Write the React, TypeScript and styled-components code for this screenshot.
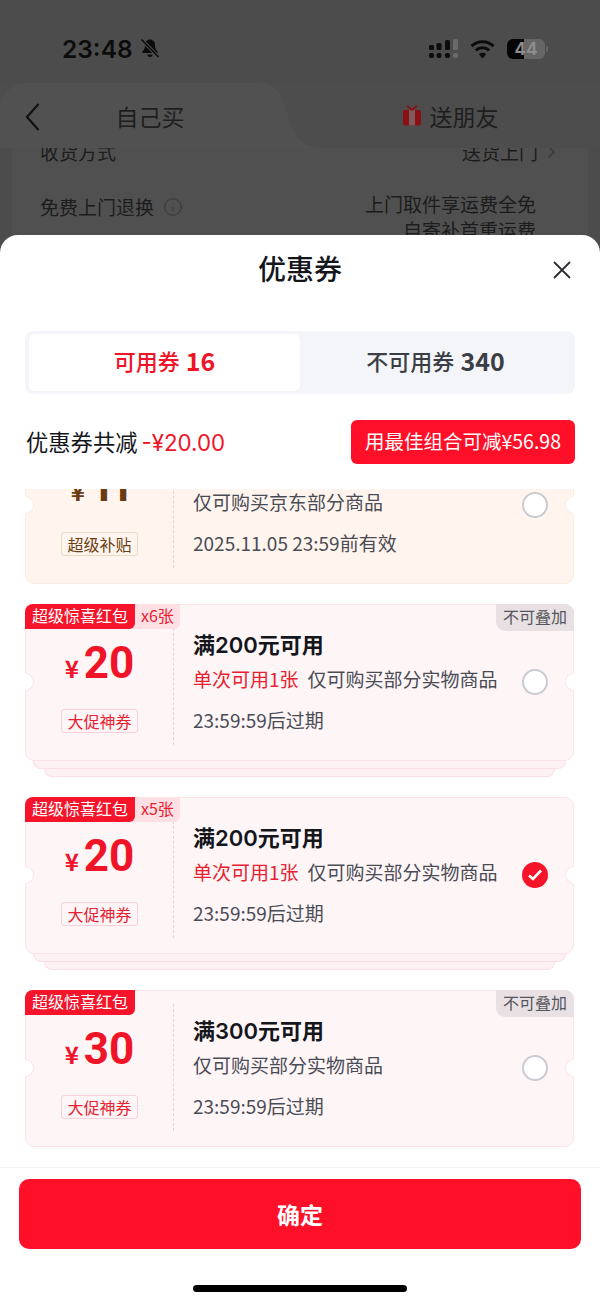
import styled, { createGlobalStyle } from 'styled-components';
import { Info } from 'lucide-react';

const GlobalStyle = createGlobalStyle`
  * {
    box-sizing: border-box;
  }
  body {
    margin: 0;
    background: #fff;
    font-family: "Noto Sans CJK SC", "Noto Sans", sans-serif;
  }
`;

const Page = styled.div`
  display: flex;
  flex-direction: column;
  width: 600px;
  height: 1304px;
  overflow: hidden;
  background: #4c4c4c;
`;

const Backdrop = styled.div`
  flex: none;
  height: 250px;
  margin-bottom: -15px;
  overflow: hidden;
`;

const StatusBar = styled.div`
  display: flex;
  align-items: center;
  justify-content: space-between;
  height: 83px;
  padding: 14px 55px 0 62px;
  color: #0c0c0c;
`;

const StatusGroup = styled.div`
  display: flex;
  align-items: center;
  gap: ${(p: { $gap: number }) => p.$gap}px;
`;

const Time = styled.span`
  font-family: Inter, sans-serif;
  font-size: 24.5px;
  font-weight: 600;
  line-height: 30px;
`;

const Battery = styled.div`
  position: relative;
  width: 38px;
  height: 20px;
  border-radius: 6px;
  background: linear-gradient(90deg, #050505 0 44%, #666 44% 100%);
  color: #8d8d8d;
  font-family: Inter, sans-serif;
  font-size: 17px;
  font-weight: 700;
  line-height: 20px;
  text-align: center;

  &::after {
    content: '';
    position: absolute;
    top: 7px;
    right: -3px;
    width: 2px;
    height: 6px;
    border-radius: 0 2px 2px 0;
    background: #666;
  }
`;

const TabBar = styled.div`
  position: relative;
  z-index: 1;
  display: grid;
  grid-template-columns: 300px 300px;
  align-items: center;
  height: 65px;
  background: #4d4d4d;
`;

const TabShape = styled.svg`
  position: absolute;
  top: 0;
  left: 0;
`;

const TabLabel = styled.div`
  position: relative;
  display: flex;
  align-items: center;
  justify-content: center;
  gap: 8px;
  color: #1e1e1e;
  font-size: 23px;
  line-height: 32px;
`;

const BackIcon = styled.svg`
  position: absolute;
  top: 19px;
  left: 25px;
`;

const BehindCard = styled.div`
  height: 120px;
  margin: -15px 12px 0;
  padding: 6px 28px 0;
  background: #505050;
  color: #1c1c1c;
  font-size: 19px;
  line-height: 26px;
`;

const BehindRow = styled.div`
  display: flex;
  align-items: flex-start;
  justify-content: space-between;
  margin-bottom: 26px;
`;

const BehindLabel = styled.span<{ $drop?: number }>`
  display: flex;
  align-items: center;
  gap: 9px;
  margin-top: ${(p) => p.$drop ?? 0}px;
`;

const BehindValue = styled.span`
  display: flex;
  align-items: center;
  gap: 9px;
  margin-right: ${(p: { $inset: number }) => p.$inset}px;
`;

const BehindLines = styled.span`
  text-align: right;
`;

const InfoIcon = styled(Info)`
  color: #333;
`;

const Sheet = styled.div`
  position: relative;
  z-index: 2;
  display: flex;
  flex: 1;
  flex-direction: column;
  min-height: 0;
  border-radius: 18px 18px 0 0;
  background: #fff;
`;

const SheetHeader = styled.div`
  position: relative;
  height: 96px;
  padding-top: 13px;
  color: #14161c;
  font-size: 28px;
  font-weight: 500;
  line-height: 40px;
  text-align: center;
`;

const CloseIcon = styled.svg`
  position: absolute;
  top: 25px;
  right: 28px;
`;

const Segment = styled.div`
  display: grid;
  grid-template-columns: 271px 1fr;
  height: 63px;
  margin: 0 25px;
  padding: 3px 4px;
  border-radius: 8px;
  background: #f4f5f9;
`;

const SegmentItem = styled.div<{ $active?: boolean }>`
  display: flex;
  align-items: center;
  justify-content: center;
  gap: 6px;
  padding-bottom: 5px;
  border-radius: 6px;
  background: ${(p) => (p.$active ? '#fff' : 'transparent')};
  color: ${(p) => (p.$active ? '#f01428' : '#3c3e46')};
  font-size: 22px;
  font-weight: 500;
`;

const SegmentCount = styled.span`
  font-size: 25px;
  font-weight: 700;
`;

const Summary = styled.div`
  display: flex;
  align-items: center;
  justify-content: space-between;
  height: 44px;
  margin: 26px 25px 25px 26px;
`;

const SummaryText = styled.div`
  padding-bottom: 3px;
  color: #14161c;
  font-size: 22.3px;
`;

const SummaryAmount = styled.span`
  margin-left: 4px;
  color: #f01428;
  font-family: Inter, sans-serif;
`;

const BestButton = styled.div`
  display: flex;
  align-items: center;
  justify-content: center;
  width: 224px;
  height: 44px;
  padding-bottom: 3px;
  border-radius: 6px;
  background: #ff1028;
  color: #fff;
  font-size: 19.5px;
  white-space: nowrap;
`;

const CouponList = styled.div`
  display: flex;
  flex: 1;
  flex-direction: column;
  gap: 20px;
  min-height: 0;
  padding: 0 26px 0 25px;
  overflow: hidden;
`;

const CouponItem = styled.div<{ $clip?: number }>`
  flex: none;
  margin-top: ${(p) => (p.$clip ? -p.$clip : 0)}px;
`;

const CouponCard = styled.div<{ $tone: 'red' | 'gold' }>`
  position: relative;
  display: grid;
  grid-template-columns: 148px 1fr;
  height: 157px;
  border: 1px solid ${(p) => (p.$tone === 'gold' ? '#f9eee2' : '#fbe3e8')};
  border-radius: 9px;
  background: ${(p) => (p.$tone === 'gold' ? '#fff5ee' : '#fef5f7')};
`;

const StackLayer = styled.div<{ $inset: number }>`
  height: 8px;
  margin: 0 ${(p) => p.$inset}px;
  border: 1px solid #fbdfe5;
  border-top: none;
  border-radius: 0 0 8px 8px;
  background: #fdf1f4;
`;

const Notch = styled.span<{ $side: 'left' | 'right'; $tone: 'red' | 'gold' }>`
  position: absolute;
  top: 68px;
  ${(p) => p.$side}: -1px;
  width: 9px;
  height: 18px;
  border: 1px solid ${(p) => (p.$tone === 'gold' ? '#f9eee2' : '#fbe3e8')};
  border-${(p) => p.$side}-color: #fff;
  border-radius: ${(p) => (p.$side === 'left' ? '0 9px 9px 0' : '9px 0 0 9px')};
  background: #fff;
`;

const PriceColumn = styled.div`
  display: flex;
  flex-direction: column;
  align-items: center;
  margin: 13px 0 15px;
  padding-top: 20px;
  border-right: 1px dashed #f7c9d1;
`;

const Price = styled.div<{ $tone: 'red' | 'gold' }>`
  display: flex;
  align-items: baseline;
  gap: 5px;
  height: 50px;
  color: ${(p) => (p.$tone === 'gold' ? '#6b3a10' : '#f01428')};
  font-family: Roboto, sans-serif;
  font-size: 44px;
  font-weight: 700;
  line-height: 50px;
  letter-spacing: ${(p) => (p.$tone === 'gold' ? '-6px' : '0')};
`;

const Yen = styled.span`
  font-family: "Noto Sans CJK SC", sans-serif;
  font-size: 24px;
  letter-spacing: 0;
`;

const PriceTag = styled.div<{ $tone: 'red' | 'gold' }>`
  display: flex;
  align-items: center;
  height: 24px;
  margin-top: 21px;
  padding: 0 5px;
  border: 1px solid ${(p) => (p.$tone === 'gold' ? '#e8d8c4' : '#fbd0d8')};
  border-radius: 3px;
  color: ${(p) => (p.$tone === 'gold' ? '#6b3f15' : '#e8202f')};
  font-size: 16px;
  white-space: nowrap;
`;

const CouponBody = styled.div`
  padding: 25px 0 0 19px;
`;

const CouponTitle = styled.div`
  color: #14161c;
  font-family: Inter, "Noto Sans CJK SC", sans-serif;
  font-size: 22px;
  font-weight: 600;
  line-height: 30px;
`;

const CouponLine = styled.div<{ $gap: number }>`
  margin-top: ${(p) => p.$gap}px;
  color: #4a4c55;
  font-size: 19px;
  line-height: 28px;
  white-space: nowrap;
`;

const LimitText = styled.span`
  margin-right: 9px;
  color: #e8202f;
`;

const Badge = styled.div`
  position: absolute;
  top: -1px;
  left: -1px;
  display: flex;
  height: 25px;
  border-radius: 8px 0 6px 0;
  background: #fddfe4;
`;

const BadgeName = styled.span`
  padding: 0 7px;
  border-radius: 8px 0 6px 0;
  background: #f5142a;
  color: #fff;
  font-size: 16px;
  line-height: 22px;
`;

const BadgeCount = styled.span`
  padding: 0 6px;
  color: #e8202f;
  font-size: 16px;
  line-height: 22px;
`;

const NoStack = styled.div`
  position: absolute;
  top: -1px;
  right: -1px;
  height: 27px;
  padding: 0 7px;
  border-radius: 0 9px 0 9px;
  background: #e8e0e2;
  color: #55565c;
  font-size: 16px;
  line-height: 24px;
`;

const Radio = styled.span<{ $checked?: boolean }>`
  position: absolute;
  top: 64px;
  right: 25px;
  display: flex;
  align-items: center;
  justify-content: center;
  width: 26px;
  height: 26px;
  border: ${(p) => (p.$checked ? 'none' : '2px solid #c9cbd0')};
  border-radius: 50%;
  background: ${(p) => (p.$checked ? '#f5142a' : '#fff')};
`;

const Footer = styled.div`
  flex: none;
  height: 137px;
  padding: 11px 19px 0;
  border-top: 1px solid #f3f3f3;
`;

const ConfirmButton = styled.div`
  display: flex;
  align-items: center;
  justify-content: center;
  height: 70px;
  border-radius: 10px;
  background: #ff1028;
  color: #fff;
  font-size: 23px;
  font-weight: 700;
`;

const HomeBar = styled.div`
  width: 214px;
  height: 7px;
  margin: 36px auto 0;
  border-radius: 4px;
  background: #000;
`;

function BellOff() {
  return (
    <svg width="20" height="21" viewBox="0 0 20 21">
      <path
        d="M10 1.500c-3 0-5 2.300-5 5.500 0 3.500-.8 5-2.500 6.500-.6.600-.2 1.500.6 1.500h13.800c.8 0 1.200-.9.600-1.500C15.800 12 15 10.500 15 7c0-3.200-2-5.500-5-5.500z"
        fill="#0c0c0c"
      />
      <path d="M7.500 16.500h5a2.500 2.500 0 0 1-5 0z" fill="#0c0c0c" />
      <path d="M1.500 1.500 18.500 19" stroke="#4c4c4c" strokeWidth="3.500" />
      <path d="M1.500 1.500 18.500 19" stroke="#0c0c0c" strokeWidth="1.600" />
    </svg>
  );
}

function SignalIcon() {
  const cols = [
    { x: 0, top: 6, h: 5, fill: '#0c0c0c' },
    { x: 7.5, top: 4, h: 7, fill: '#0c0c0c' },
    { x: 16, top: 1, h: 10, fill: '#0c0c0c' },
    { x: 24, top: 0, h: 11, fill: '#6a6a6a' },
  ];
  return (
    <svg width="29" height="20" viewBox="0 0 29 20">
      {cols.map((c) => (
        <g key={c.x} fill={c.fill}>
          <rect x={c.x} y={c.top} width="5" height={c.h} rx="1.500" />
          <rect x={c.x} y="14" width="5" height="5" rx="2" />
        </g>
      ))}
    </svg>
  );
}

function WifiIcon() {
  return (
    <svg width="25" height="20" viewBox="0 0 25 20" fill="none" stroke="#0c0c0c" strokeWidth="3">
      <path d="M1.500 7.200a16 16 0 0 1 22 0" />
      <path d="M5.800 11.400a10 10 0 0 1 13.400 0" />
      <path d="M12.500 19.500 8.800 15.200a5.500 5.500 0 0 1 7.400 0z" fill="#0c0c0c" stroke="none" />
    </svg>
  );
}

function GiftIcon() {
  return (
    <svg width="20" height="21" viewBox="0 0 20 21">
      <path
        d="M1 6.500a1.500 1.500 0 0 1 1.500-1.500h15a1.500 1.500 0 0 1 1.500 1.500V18a2.500 2.500 0 0 1-2.500 2.500h-13A2.500 2.500 0 0 1 1 18z"
        fill="#8b1014"
      />
      <rect x="7" y="5" width="6" height="15.500" fill="#7d5a5c" />
      <path d="M10 5 5 .8M10 5l5-4.200" stroke="#8b1014" strokeWidth="2" />
    </svg>
  );
}

interface CouponProps {
  tone?: 'red' | 'gold';
  amount: string;
  tag: string;
  title: string;
  limit?: boolean;
  scope: string;
  expiry: string;
  badge?: string;
  count?: string;
  noStack?: boolean;
  checked?: boolean;
  stacked?: boolean;
  clip?: number;
}

function Coupon({
  tone = 'red',
  amount,
  tag,
  title,
  limit,
  scope,
  expiry,
  badge,
  count,
  noStack,
  checked,
  stacked,
  clip,
}: CouponProps) {
  return (
    <CouponItem $clip={clip}>
      <CouponCard $tone={tone}>
        <Notch $side="left" $tone={tone} />
        <Notch $side="right" $tone={tone} />
        {badge && (
          <Badge>
            <BadgeName>{badge}</BadgeName>
            {count && <BadgeCount>{count}</BadgeCount>}
          </Badge>
        )}
        {noStack && <NoStack>不可叠加</NoStack>}
        <PriceColumn>
          <Price $tone={tone}>
            <Yen>¥</Yen>
            {amount}
          </Price>
          <PriceTag $tone={tone}>{tag}</PriceTag>
        </PriceColumn>
        <CouponBody>
          <CouponTitle>{title}</CouponTitle>
          <CouponLine $gap={5}>
            {limit && <LimitText>单次可用1张</LimitText>}
            {scope}
          </CouponLine>
          <CouponLine $gap={13}>{expiry}</CouponLine>
        </CouponBody>
        <Radio $checked={checked}>
          {checked && (
            <svg width="16" height="14" viewBox="0 0 16 14" fill="none">
              <path d="M2 7.500 6 11l8-8.500" stroke="#fff" strokeWidth="2.600" />
            </svg>
          )}
        </Radio>
      </CouponCard>
      {stacked && (
        <>
          <StackLayer $inset={8} />
          <StackLayer $inset={19} />
        </>
      )}
    </CouponItem>
  );
}

export default function App() {
  return (
    <Page>
      <GlobalStyle />
      <Backdrop>
        <StatusBar>
          <StatusGroup $gap={7}>
            <Time>23:48</Time>
            <BellOff />
          </StatusGroup>
          <StatusGroup $gap={12}>
            <SignalIcon />
            <WifiIcon />
            <Battery>44</Battery>
          </StatusGroup>
        </StatusBar>
        <TabBar>
          <TabShape width="330" height="65" viewBox="0 0 330 65">
            <path d="M0 65V28C0 10 12 0 30 0H258C274 0 282 10 286 26C292 50 300 65 322 65Z" fill="#515151" />
          </TabShape>
          <BackIcon width="15" height="30" viewBox="0 0 15 30" fill="none">
            <path d="M13.500 2 2 15l11.500 13" stroke="#111" strokeWidth="2.200" />
          </BackIcon>
          <TabLabel>自己买</TabLabel>
          <TabLabel>
            <GiftIcon />
            送朋友
          </TabLabel>
        </TabBar>
        <BehindCard>
          <BehindRow>
            <BehindLabel>收货方式</BehindLabel>
            <BehindValue $inset={4}>
              送货上门
              <svg width="9" height="14" viewBox="0 0 9 14" fill="none">
                <path d="M1.500 1.500 7 7l-5.500 5.500" stroke="#3a3a3a" strokeWidth="1.600" />
              </svg>
            </BehindValue>
          </BehindRow>
          <BehindRow>
            <BehindLabel $drop={3}>
              免费上门退换
              <InfoIcon size={20} strokeWidth={1} />
            </BehindLabel>
            <BehindValue $inset={24}>
              <BehindLines>
                上门取件享运费全免
                <br />
                自寄补首重运费
              </BehindLines>
            </BehindValue>
          </BehindRow>
        </BehindCard>
      </Backdrop>
      <Sheet>
        <SheetHeader>
          优惠券
          <CloseIcon width="20" height="20" viewBox="0 0 20 20" fill="none">
            <path d="M2 2l16 16M18 2 2 18" stroke="#2a2c33" strokeWidth="1.800" />
          </CloseIcon>
        </SheetHeader>
        <Segment>
          <SegmentItem $active>
            可用券<SegmentCount>16</SegmentCount>
          </SegmentItem>
          <SegmentItem>
            不可用券<SegmentCount>340</SegmentCount>
          </SegmentItem>
        </Segment>
        <Summary>
          <SummaryText>
            优惠券共减<SummaryAmount>-¥20.00</SummaryAmount>
          </SummaryText>
          <BestButton>用最佳组合可减¥56.98</BestButton>
        </Summary>
        <CouponList>
          <Coupon
            tone="gold"
            clip={62}
            amount="11"
            tag="超级补贴"
            title="满88元可用"
            scope="仅可购买京东部分商品"
            expiry="2025.11.05 23:59前有效"
          />
          <Coupon
            amount="20"
            tag="大促神券"
            title="满200元可用"
            limit
            scope="仅可购买部分实物商品"
            expiry="23:59:59后过期"
            badge="超级惊喜红包"
            count="x6张"
            noStack
            stacked
          />
          <Coupon
            amount="20"
            tag="大促神券"
            title="满200元可用"
            limit
            scope="仅可购买部分实物商品"
            expiry="23:59:59后过期"
            badge="超级惊喜红包"
            count="x5张"
            checked
            stacked
          />
          <Coupon
            amount="30"
            tag="大促神券"
            title="满300元可用"
            scope="仅可购买部分实物商品"
            expiry="23:59:59后过期"
            badge="超级惊喜红包"
            noStack
          />
        </CouponList>
        <Footer>
          <ConfirmButton>确定</ConfirmButton>
          <HomeBar />
        </Footer>
      </Sheet>
    </Page>
  );
}
